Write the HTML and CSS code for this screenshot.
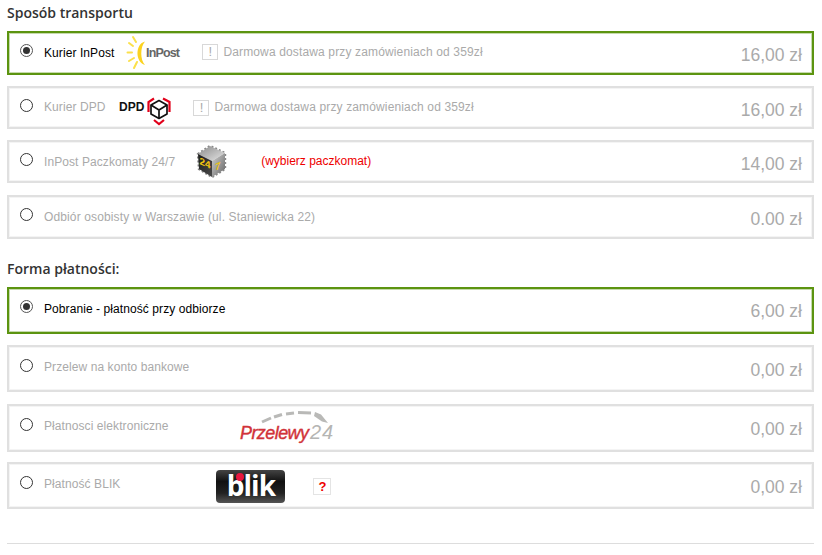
FILE: index.html
```html
<!DOCTYPE html>
<html lang="pl">
<head>
<meta charset="utf-8">
<title>Sposób transportu</title>
<link rel="stylesheet" href="styles.css">
</head>
<body>
<main class="page">
  <h2 class="title title-first">Sposób transportu</h2>
  <div class="options">
    <div class="opt h44 selected">
      <span class="radio on"></span>
      <span class="name">Kurier InPost</span>
      <svg class="logo logo-inpost" width="54" height="34" viewBox="0 0 54 34">
        <g stroke="#fbe04a" stroke-width="2" stroke-linecap="round" fill="none">
          <path d="M6 2 L9 7"/><path d="M2 8 L6 11"/><path d="M0.500 17.500 H5"/><path d="M2 26 L7 23"/><path d="M7 33 L10 27"/>
        </g>
        <path d="M18 6.500 C8 9 8 27 18 30 C13 25 13 12 18 6.500Z" fill="#fbd21e"/>
        <text x="19" y="22" textLength="34" class="inpost-text">InPost</text>
      </svg>
      <span class="info">!</span>
      <span class="note">Darmowa dostawa przy zamówieniach od 359zł</span>
      <span class="price">16,00 zł</span>
    </div>
    <div class="opt h43 up">
      <span class="radio"></span>
      <span class="name">Kurier DPD</span>
      <svg class="logo logo-dpd" width="54" height="30" viewBox="0 0 54 30">
        <text x="1" y="15" class="dpd-text">DPD</text>
        <g fill="none" stroke="#e1001a" stroke-width="2.200">
          <path d="M30.500 16 V6 L36 2.500"/><path d="M45 2.500 L51.500 6 V16"/><path d="M36 24 L41 28 L46 24"/>
        </g>
        <g fill="none" stroke="#111" stroke-width="1.700" stroke-linejoin="round">
          <path d="M41 4.500 L49 9 V18 L41 22.500 L33 18 V9Z"/><path d="M33 9 L41 14 L49 9 M41 14 V22.500"/>
        </g>
      </svg>
      <span class="info info-low">!</span>
      <span class="note">Darmowa dostawa przy zamówieniach od 359zł</span>
      <span class="price">16,00 zł</span>
    </div>
    <div class="opt h43 mb12">
      <span class="radio"></span>
      <span class="name">InPost Paczkomaty 24/7</span>
      <svg class="logo logo-box" width="32" height="33" viewBox="0 0 32 33">
        <defs>
          <linearGradient id="boxTop" x1="0" y1="0" x2="1" y2="1"><stop offset="0" stop-color="#8a8a8a"/><stop offset="1" stop-color="#e6e6e6"/></linearGradient>
          <linearGradient id="boxLeft" x1="0" y1="0" x2="1" y2="1"><stop offset="0" stop-color="#1c1c1c"/><stop offset="1" stop-color="#4a4a4a"/></linearGradient>
          <linearGradient id="boxRight" x1="0" y1="0" x2="1" y2="1"><stop offset="0" stop-color="#d0d0d0"/><stop offset="1" stop-color="#666"/></linearGradient>
        </defs>
        <path d="M3 9 L15 1 L30 8 V24 L17 32 L4 24Z" fill="none" stroke="#888" stroke-width="2.400" stroke-dasharray="2 2"/>
        <path d="M15 1 L30 8 L17 16 L3 9Z" fill="url(#boxTop)"/>
        <path d="M3 9 L17 16 V32 L4 24Z" fill="url(#boxLeft)"/>
        <path d="M30 8 V24 L17 32 V16Z" fill="url(#boxRight)"/>
        <text class="box-num" transform="translate(4.500 19) skewY(24)">24</text>
        <text class="box-num" transform="translate(20 26) skewY(-26)">7</text>
      </svg>
      <span class="pick">(wybierz paczkomat)</span>
      <span class="price">14,00 zł</span>
    </div>
    <div class="opt h44">
      <span class="radio"></span>
      <span class="name name-wide">Odbiór osobisty w Warszawie (ul. Staniewicka 22)</span>
      <span class="price">0.00 zł</span>
    </div>
  </div>

  <h2 class="title title-second">Forma płatności:</h2>
  <div class="options">
    <div class="opt h47 selected">
      <span class="radio on"></span>
      <span class="name">Pobranie - płatność przy odbiorze</span>
      <span class="price">6,00 zł</span>
    </div>
    <div class="opt h47 low mb12">
      <span class="radio"></span>
      <span class="name">Przelew na konto bankowe</span>
      <span class="price">0,00 zł</span>
    </div>
    <div class="opt h48 low mb10">
      <span class="radio"></span>
      <span class="name">Płatnosci elektroniczne</span>
      <svg class="logo logo-p24" width="96" height="36" viewBox="0 0 96 36">
        <g stroke="#b9b9b7" stroke-width="3" fill="none">
          <path d="M23 12 L32 8"/><path d="M35 7 L43 4.500"/><path d="M47 4 L55 3"/><path d="M59 2.500 L72 3"/>
        </g>
        <path d="M76 2 L82 4.500 L89 13 L83 11.500 L75 6Z" fill="#b9b9b7"/>
        <text x="1" y="29" textLength="69" class="p24-name">Przelewy</text>
        <text x="71" y="29" textLength="23" class="p24-num">24</text>
      </svg>
      <span class="price">0,00 zł</span>
    </div>
    <div class="opt h47 low">
      <span class="radio"></span>
      <span class="name">Płatność BLIK</span>
      <div class="blik"><span class="blik-text">blik</span><span class="blik-dot"></span></div>
      <span class="help">?</span>
      <span class="price">0,00 zł</span>
    </div>
  </div>
  <hr class="rule">
</main>
</body>
</html>
```
FILE: styles.css
```css
* { box-sizing: border-box; }
html, body { margin: 0; padding: 0; background: #fff; }
body { font-family: "Liberation Sans", Arial, sans-serif; font-size: 12px; color: #aaa; overflow: hidden; }
.page { width: 822px; height: 555px; padding: 0 8px 0 7px; }

.title { margin: 0; font-family: "Open Sans", sans-serif; font-size: 14px; font-weight: 600; line-height: 20px; color: #333; }
.title-first { padding-top: 3px; height: 31px; }
.title-second { padding-top: 20px; height: 48px; }

.options { display: flex; flex-direction: column; }
.opt { position: relative; display: flex; align-items: flex-start; flex: none; border: 2px solid #e0e0e0; box-shadow: inset 0 0 0 1px rgba(224, 224, 224, .35); padding: 11px 0 0 11px; width: 807px; margin-bottom: 11px; }
.opt:last-child { margin-bottom: 0; }
.h43 { height: 43px; }
.h44 { height: 44px; }
.h47 { height: 47px; }
.h48 { height: 48px; }
.mb10 { margin-bottom: 10px; }
.mb12 { margin-bottom: 12px; }
.low { padding-top: 12px; }
.selected { border-color: #5c9410; box-shadow: inset 0 0 0 1px rgba(92, 148, 16, .35); color: #000; }

.radio { flex: none; width: 13px; height: 13px; border: 1px solid #333; border-radius: 50%; background: #fff; margin-right: 11px; position: relative; }
.radio.on { border-color: #555; }
.radio.on::after { content: ""; position: absolute; left: 2px; top: 2px; width: 7px; height: 7px; border-radius: 50%; background: #333; }

.name { line-height: 14px; margin-top: 2px; white-space: nowrap; letter-spacing: .08px; }
.name-wide { letter-spacing: .13px; }
.up .name { margin-top: 1px; }
.low .name { margin-top: 1px; }
.price { margin-left: auto; margin-right: 10px; margin-top: 1px; font-size: 17.5px; line-height: 20px; color: #aaa; white-space: nowrap; }
.logo { flex: none; display: block; overflow: visible; }

.logo-inpost { margin: -9px 0 0 13px; }
.inpost-text { font-family: "Liberation Sans", sans-serif; font-size: 12.5px; font-weight: 700; fill: #666; }
.logo-dpd { margin: -3px 0 0 13px; }
.dpd-text { font-family: "Liberation Sans", sans-serif; font-size: 12px; font-weight: 700; fill: #111; }
.logo-box { margin: -8px 0 0 20px; }
.box-num { font-family: "Liberation Sans", sans-serif; font-size: 10px; font-weight: 700; fill: #f2c40f; }
.logo-p24 { margin: -8px 0 0 70px; }
.p24-name { font-family: "Liberation Sans", sans-serif; font-size: 18px; font-style: italic; fill: #d13239; stroke: #d13239; stroke-width: .4px; }
.p24-num { font-family: "Liberation Sans", sans-serif; font-size: 20px; font-style: italic; fill: #b5b5b3; }

.info { flex: none; width: 16px; height: 16px; border: 1px solid #d8d8d8; text-align: center; font-size: 13px; line-height: 14px; color: #aaa; margin: 0 5px 0 21px; }
.info-low { margin-top: 1px; }
.note { line-height: 14px; white-space: nowrap; color: #aaa; margin-top: 1px; letter-spacing: .14px; }
.pick { color: #e00; line-height: 14px; margin: 1px 0 0 34px; white-space: nowrap; }

.blik { position: relative; flex: none; width: 69px; height: 33px; margin: -6px 0 0 96px; border-radius: 4px; background: linear-gradient(#444, #111 35%, #222 70%, #555); text-align: center; }
.blik-text { color: #fff; font-family: "Open Sans", sans-serif; font-weight: 700; font-size: 28px; line-height: 31px; letter-spacing: -1px; }
.blik-dot { position: absolute; left: 20px; top: 3px; width: 8px; height: 8px; border-radius: 50%; background: #e8173f; }
.help { flex: none; width: 18px; height: 17px; margin: 2px 0 0 28px; border: 1px solid #e4e4e4; text-align: center; font-size: 13px; font-weight: 700; line-height: 15px; color: #e00; }

.rule { border: 0; border-top: 1px solid #ddd; margin: 34px 0 0; width: 807px; }
```
